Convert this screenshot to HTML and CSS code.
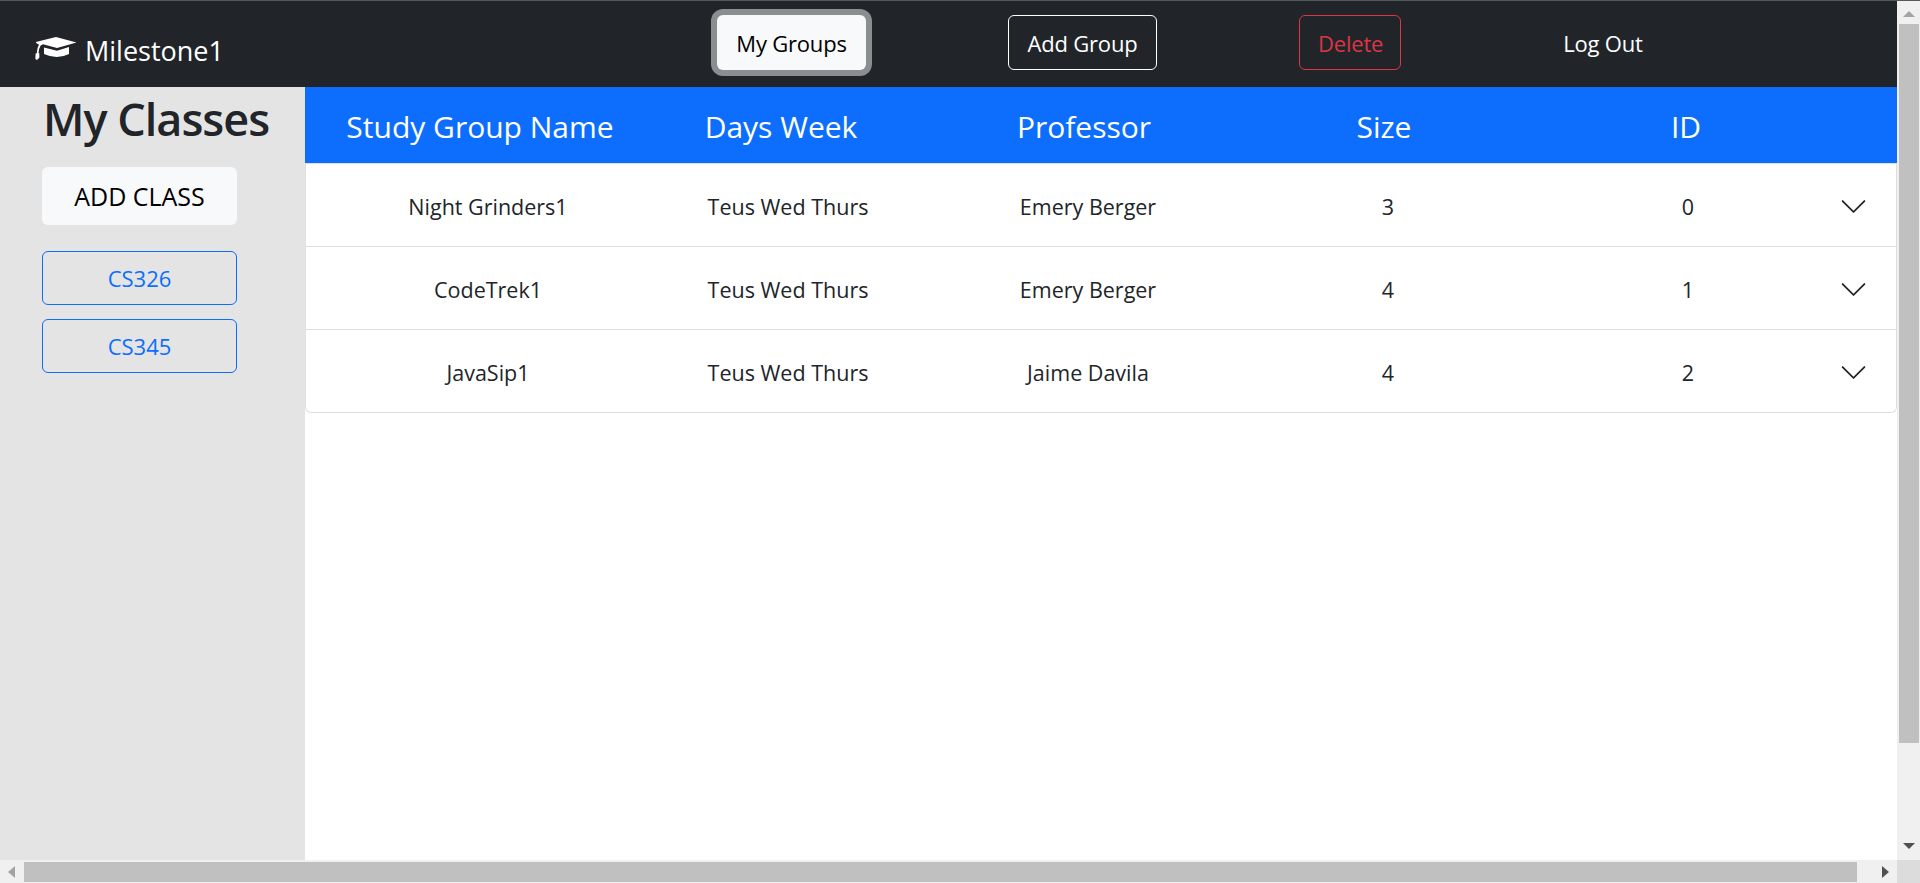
FILE: index.html
```html
<!DOCTYPE html>
<html lang="en">
<head>
    <meta charset="UTF-8">
    <meta name="viewport" content="width=device-width, initial-scale=1.0">
    <title>Milestone1</title>
    <link rel="stylesheet" href="styles.css">
</head>
<body>
    <div class="window">
        <div class="page">
            <header class="navbar">
                <a class="brand" href="#">
                    <svg class="brand-icon" viewBox="0 0 42 24">
                        <path d="M21 0 41.500 5.400 22 11 8 7.200 5.500 8.500 1.500 6.200 0.800 5Z"/>
                        <path d="M9 10.500 22 13.800 34 10V17Q22 23 9 17Z"/>
                        <path class="tassel" d="M5.500 6.500C3.500 10 2.500 13 2.500 17"/>
                        <path d="M0.600 16.500 4.200 16 4.400 20.500 2 23 0.400 22Z"/>
                    </svg>
                    <span>Milestone1</span>
                </a>
                <nav class="nav-buttons">
                    <button class="btn btn-light-focus">My Groups</button>
                    <button class="btn btn-outline-white">Add Group</button>
                    <button class="btn btn-outline-danger">Delete</button>
                    <button class="btn btn-plain">Log Out</button>
                </nav>
            </header>

            <div class="content">
                <aside class="sidebar">
                    <h1>My Classes</h1>
                    <button class="add-class">ADD CLASS</button>
                    <button class="class-btn class-first">CS326</button>
                    <button class="class-btn">CS345</button>
                </aside>

                <main class="groups">
                    <div class="table-head">
                        <div>Study Group Name</div>
                        <div>Days Week</div>
                        <div>Professor</div>
                        <div>Size</div>
                        <div>ID</div>
                    </div>
                    <div class="accordion">
                        <div class="row">
                            <div>Night Grinders1</div>
                            <div>Teus Wed Thurs</div>
                            <div>Emery Berger</div>
                            <div>3</div>
                            <div>0</div>
                            <svg class="chevron" viewBox="0 0 16 16"><path d="M1.646 4.646a.5.5 0 0 1 .708 0L8 10.293l5.646-5.647a.5.5 0 0 1 .708.708l-6 6a.5.5 0 0 1-.708 0l-6-6a.5.5 0 0 1 0-.708z"/></svg>
                        </div>
                        <div class="row">
                            <div>CodeTrek1</div>
                            <div>Teus Wed Thurs</div>
                            <div>Emery Berger</div>
                            <div>4</div>
                            <div>1</div>
                            <svg class="chevron" viewBox="0 0 16 16"><path d="M1.646 4.646a.5.5 0 0 1 .708 0L8 10.293l5.646-5.647a.5.5 0 0 1 .708.708l-6 6a.5.5 0 0 1-.708 0l-6-6a.5.5 0 0 1 0-.708z"/></svg>
                        </div>
                        <div class="row">
                            <div>JavaSip1</div>
                            <div>Teus Wed Thurs</div>
                            <div>Jaime Davila</div>
                            <div>4</div>
                            <div>2</div>
                            <svg class="chevron" viewBox="0 0 16 16"><path d="M1.646 4.646a.5.5 0 0 1 .708 0L8 10.293l5.646-5.647a.5.5 0 0 1 .708.708l-6 6a.5.5 0 0 1-.708 0l-6-6a.5.5 0 0 1 0-.708z"/></svg>
                        </div>
                    </div>
                </main>
            </div>
        </div>

        <div class="scroll-v">
            <span class="arrow arrow-up"></span>
            <div class="thumb-v"></div>
            <span class="arrow arrow-down"></span>
        </div>
        <div class="scroll-h">
            <span class="arrow arrow-left"></span>
            <div class="thumb-h"></div>
            <span class="arrow arrow-right"></span>
        </div>
        <div class="scroll-corner"></div>
    </div>
</body>
</html>
```

FILE: styles.css
```css
* {
    box-sizing: border-box;
}

body {
    margin: 0;
    font-family: "Open Sans", "Noto Sans", sans-serif;
    color: #212529;
    background-color: #fff;
    overflow: hidden;
}

button {
    font-family: inherit;
}

.window {
    display: grid;
    grid-template-columns: 1897px 23px;
    grid-template-rows: 859px 23px;
    height: 883px;
    border-top: 1px solid #55585b;
}

.page {
    display: flex;
    flex-direction: column;
    min-width: 0;
}

/* navbar */
.navbar {
    display: flex;
    align-items: flex-start;
    height: 86px;
    flex-shrink: 0;
    padding-top: 14px;
    background-color: #212529;
}

.brand {
    display: flex;
    align-items: center;
    gap: 8px;
    height: 55px;
    margin: 8px 0 0 35px;
    width: 682px;
    color: #fff;
    font-size: 27px;
    text-decoration: none;
}

.brand-icon {
    width: 42px;
    height: 24px;
    margin-top: -4px;
    fill: #fff;
}

.tassel {
    fill: none;
    stroke: #fff;
    stroke-width: 1.8;
}

.nav-buttons {
    display: flex;
    gap: 142px;
}

.btn {
    height: 55px;
    padding: 0 18px;
    font-size: 22px;
    letter-spacing: -0.2px;
    border-radius: 6px;
    background: transparent;
    border: 1px solid transparent;
}

.btn-light-focus {
    width: 149px;
    color: #000;
    background-color: #f8f9fa;
    box-shadow: 0 0 0 6px #8b8e91;
}

.btn-outline-white {
    width: 149px;
    color: #fff;
    border-color: #fff;
}

.btn-outline-danger {
    width: 102px;
    color: #dc3545;
    border-color: #dc3545;
}

.btn-plain {
    width: 120px;
    color: #fff;
}

/* sidebar + table */
.content {
    display: flex;
    flex: 1;
    min-height: 0;
}

.sidebar {
    display: flex;
    flex-direction: column;
    width: 305px;
    flex-shrink: 0;
    padding: 0 68px 0 42px;
    background-color: #e4e4e4;
}

.sidebar h1 {
    margin: 0 -30px 16px 1px;
    font-size: 45px;
    font-weight: 600;
    line-height: 64px;
    white-space: nowrap;
    letter-spacing: -1px;
}

.add-class {
    height: 58px;
    font-size: 25px;
    letter-spacing: 0;
    color: #000;
    background-color: #f8f9fa;
    border: none;
    border-radius: 6px;
}

.class-btn {
    height: 54px;
    margin-top: 14px;
    font-size: 22px;
    color: #0d6efd;
    background: transparent;
    border: 1px solid #0d6efd;
    border-radius: 6px;
}

.class-first {
    margin-top: 26px;
}

.groups {
    flex: 1;
    min-width: 0;
}

.table-head {
    display: grid;
    grid-template-columns: 300px 302px 304px 296px 308px;
    align-items: center;
    height: 76px;
    padding: 2px 0 0 25px;
    color: #fff;
    background-color: #0d6efd;
    font-size: 30px;
    text-align: center;
}

.accordion {
    border: 1px solid #dfdfdf;
    border-top: none;
    border-radius: 0 0 6px 6px;
}

.row {
    display: grid;
    grid-template-columns: 300px 300px 300px 300px 300px 1fr;
    align-items: center;
    height: 83px;
    padding: 2px 0 0 32px;
    font-size: 21.5px;
    text-align: center;
    border-top: 1px solid #dfdfdf;
}

.chevron {
    width: 29px;
    height: 29px;
    fill: #212529;
    margin-left: 1px;
}

/* browser scrollbars */
.scroll-v {
    display: flex;
    flex-direction: column;
    align-items: center;
    padding: 0 0 0 1px;
    background-color: #f0f0f0;
}

.thumb-v {
    width: 20px;
    height: 719px;
    margin: 7px 0 100px;
    background-color: #c0c0c0;
}

.scroll-h {
    display: flex;
    align-items: center;
    padding-left: 8px;
    background-color: #f0f0f0;
}

.thumb-h {
    width: 1833px;
    height: 20px;
    margin: 0 25px 0 9px;
    background-color: #c0c0c0;
}

.scroll-corner {
    background-color: #dcdcdc;
}

.arrow {
    display: block;
    width: 0;
    height: 0;
    flex-shrink: 0;
    border-style: solid;
    border-color: transparent;
}

.arrow-up {
    margin-top: 10px;
    border-width: 0 6px 6px;
    border-bottom-color: #a3a3a3;
}

.arrow-down {
    border-width: 6px 6px 0;
    border-top-color: #505050;
}

.arrow-left {
    border-width: 6px 7px 6px 0;
    border-right-color: #a3a3a3;
}

.arrow-right {
    border-width: 6px 0 6px 7px;
    border-left-color: #505050;
}
```
